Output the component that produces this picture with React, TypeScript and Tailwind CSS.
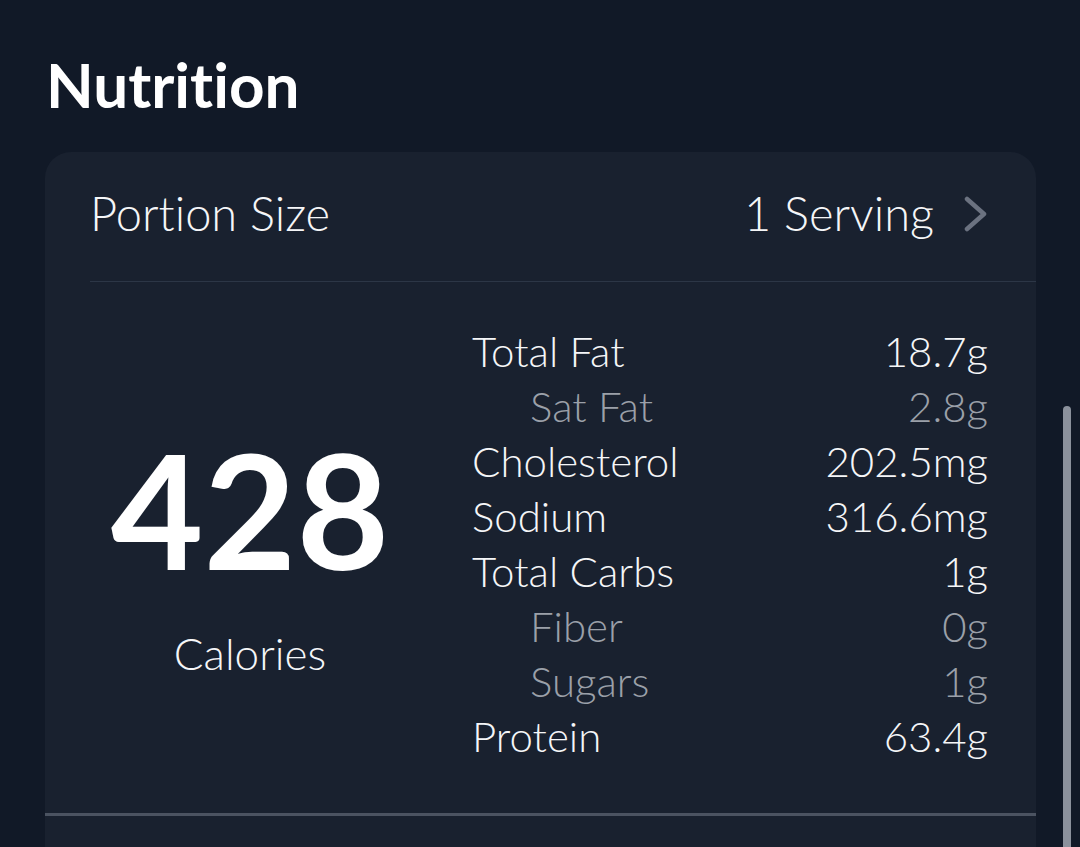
import React from "react";

const rows: { label: string; value: string; sub?: boolean }[] = [
  { label: "Total Fat", value: "18.7g" },
  { label: "Sat Fat", value: "2.8g", sub: true },
  { label: "Cholesterol", value: "202.5mg" },
  { label: "Sodium", value: "316.6mg" },
  { label: "Total Carbs", value: "1g" },
  { label: "Fiber", value: "0g", sub: true },
  { label: "Sugars", value: "1g", sub: true },
  { label: "Protein", value: "63.4g" },
];

export default function App() {
  return (
    <div
      className="relative w-[1080px] h-[847px] overflow-hidden bg-[#111927] text-[#f5f6f8] [font-variant-ligatures:none]"
      style={{ fontFamily: "Lato, 'Open Sans', sans-serif" }}
    >
      <div className="pl-[46px] pt-[53px] h-[152px]">
        <h1 className="text-[62px] leading-[62px] font-bold text-white">Nutrition</h1>
      </div>
      <div className="ml-[45px] w-[991px] h-[720px] rounded-t-[26px] bg-[#19212f]">
        <div className="pl-[45px] pt-[38px]">
          <div className="flex items-center justify-between pr-[48px] pb-[44px]">
            <span className="text-[47px] leading-[47px] font-light">Portion Size</span>
            <div className="flex items-center gap-[30px]">
              <span className="text-[47px] leading-[47px] font-light">1 Serving</span>
              <svg width="24" height="36" viewBox="0 0 24 36" fill="none">
                <path
                  d="M3 3 L20 18 L3 33"
                  stroke="#6b7280"
                  strokeWidth="4.5"
                  strokeLinecap="round"
                  strokeLinejoin="round"
                />
              </svg>
            </div>
          </div>
          <div className="h-px bg-[#2c3646]" />
        </div>
        <div className="flex pt-[42px] pb-[49px]">
          <div className="w-[410px] flex flex-col items-center pt-[104px]">
            <div className="text-[160px] leading-[160px] font-bold text-white">428</div>
            <div className="mt-[43px] text-[44px] leading-[44px] font-light">Calories</div>
          </div>
          <div className="flex-1 pl-[17px] pr-[48px]">
            {rows.map((r) => (
              <div
                key={r.label}
                className={`flex justify-between h-[55px] text-[42px] leading-[55px] font-light ${
                  r.sub ? "text-[#9ba0a9]" : "text-[#f5f6f8]"
                }`}
              >
                <span className={r.sub ? "pl-[58px]" : ""}>{r.label}</span>
                <span>{r.value}</span>
              </div>
            ))}
          </div>
        </div>
        <div className="h-[3px] bg-[#4b5361]" />
      </div>
      <div className="absolute left-[1063px] top-[406px] w-[8px] h-[460px] rounded-full bg-[#8b919c]" />
    </div>
  );
}
